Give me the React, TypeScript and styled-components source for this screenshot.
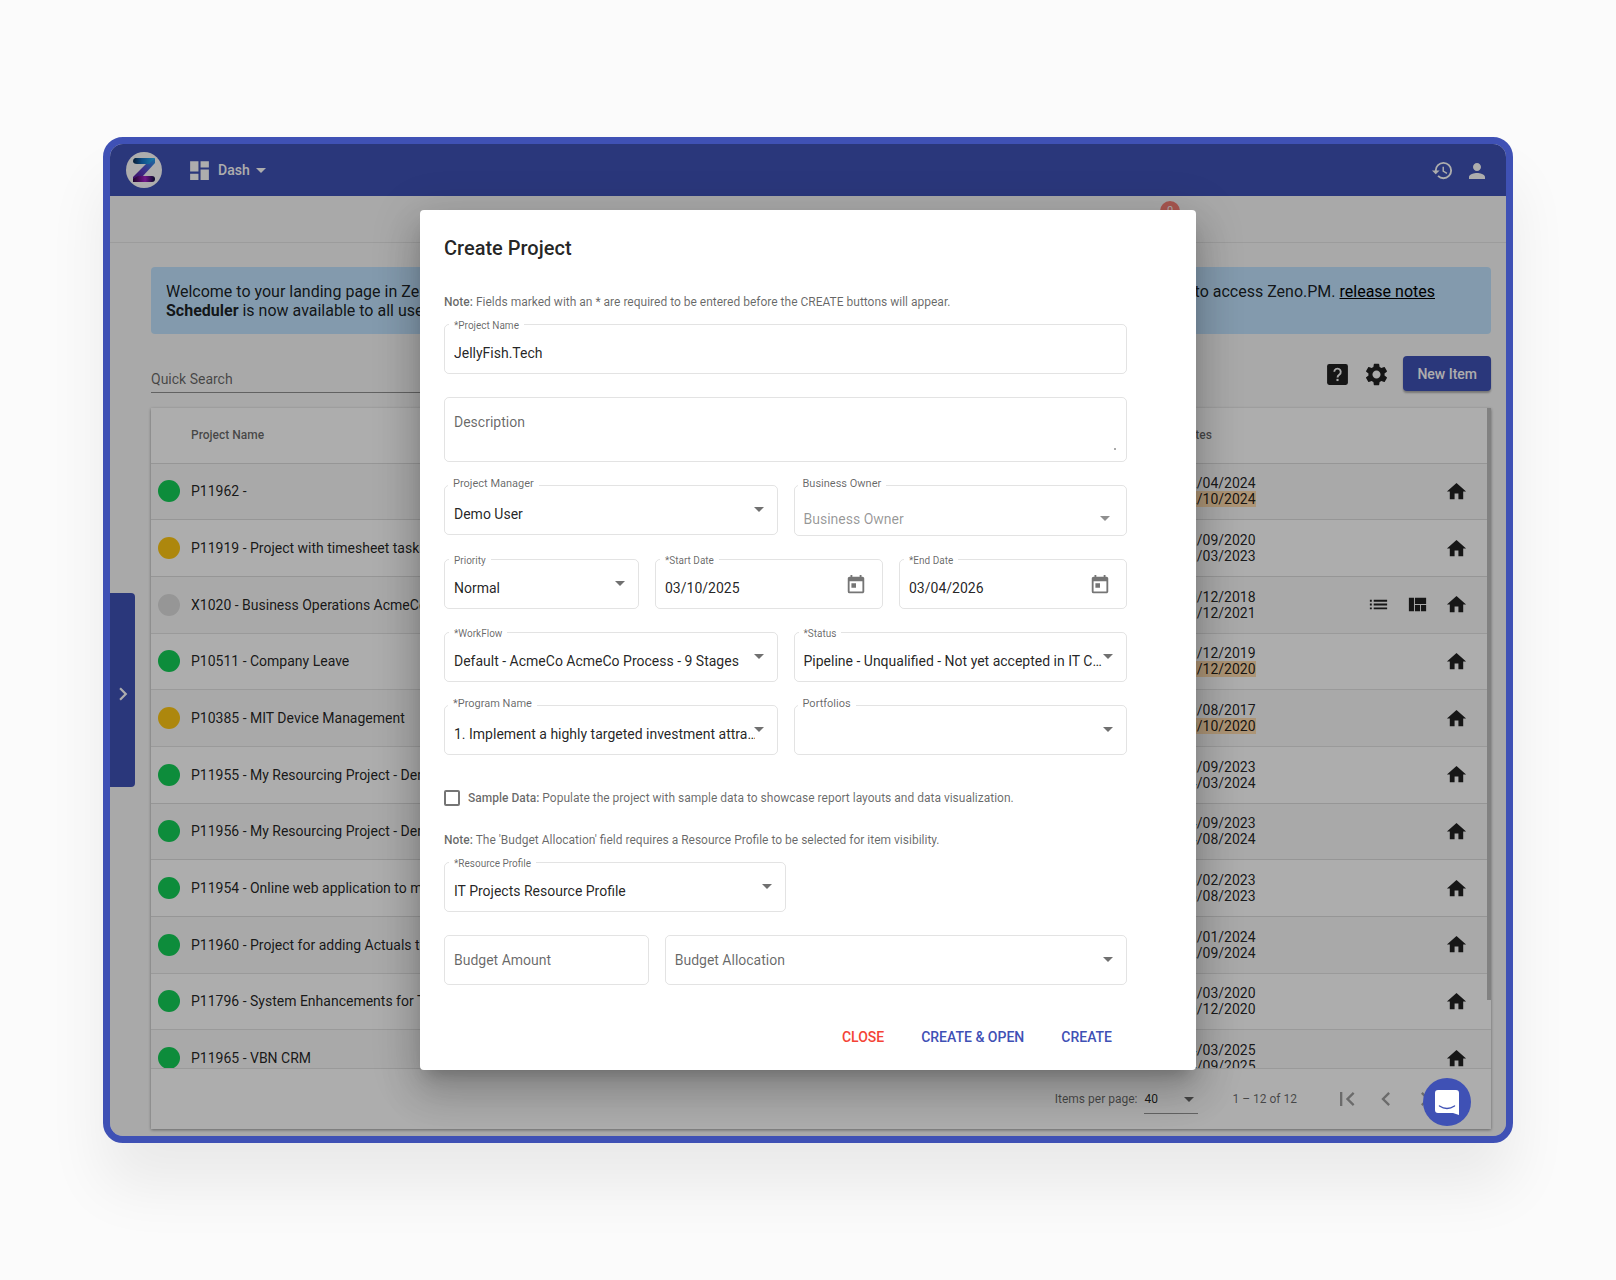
import React from 'react';
import styled, { createGlobalStyle } from 'styled-components';
import {
  MdDashboard, MdHistory, MdPerson, MdSettings, MdHome, MdList, MdViewQuilt,
  MdChevronRight, MdChevronLeft, MdFirstPage, MdToday,
} from 'react-icons/md';

const indigo = '#3f51b5';
const muted = 'rgba(0, 0, 0, 0.6)';
const line = 'rgba(0, 0, 0, 0.11)';

const GlobalStyle = createGlobalStyle`
  *, *::before, *::after { box-sizing: border-box; }
  body { margin: 0; background: #fbfbfb; }
  body, button, input, select, textarea {
    font-family: Roboto, "Liberation Sans", sans-serif;
    font-size: 14px;
    color: rgba(0, 0, 0, 0.87);
  }
  button { border: 0; padding: 0; background: none; cursor: pointer; }
  p, h1 { margin: 0; }
  svg { display: block; flex: none; }
`;

const Page = styled.div`
  min-height: 100vh;
  display: flex;
  align-items: center;
  padding: 40px 103px;
`;

const Frame = styled.div`
  position: relative;
  flex: 1;
  min-width: 0;
  overflow: hidden;
  border: 7px solid ${indigo};
  border-radius: 20px;
  background: #fafafa;
`;

const FrameShadow = styled.div`
  flex: 1;
  min-width: 0;
  display: flex;
  border-radius: 20px;
  box-shadow: 0 44px 60px rgba(0, 0, 0, 0.07);
`;

const TopBar = styled.header`
  display: flex;
  align-items: center;
  height: 52px;
  padding: 0 17px 0 16px;
  background: ${indigo};
  color: #fff;
`;

const Menu = styled.button`
  display: flex;
  align-items: center;
  gap: 6px;
  margin-left: 25px;
  color: #fff;
  font-weight: 500;
`;

const TopActions = styled.div`
  display: flex;
  gap: 11px;
  margin-left: auto;
  padding-top: 1px;
`;

const IconButton = styled.button`
  display: flex;
  align-items: center;
  justify-content: center;
  color: inherit;
`;

const SubNav = styled.nav`
  display: flex;
  justify-content: flex-end;
  height: 47px;
  padding: 5px 326px 0 0;
  border-bottom: 1px solid rgba(0, 0, 0, 0.08);
`;

const Badge = styled.span`
  width: 20px;
  height: 20px;
  border-radius: 50%;
  background: #f98077;
  color: #fff;
  font-size: 11px;
  line-height: 20px;
  text-align: center;
`;

const Content = styled.main`
  padding: 24px 15px 7px 41px;
`;

const Banner = styled.section`
  display: grid;
  grid-template-columns: 1fr auto;
  align-items: start;
  height: 67px;
  padding: 15px 56px 0 15px;
  border-radius: 4px;
  background: #c1e4ff;
  font-size: 16px;
  line-height: 19px;
  a { color: #000; }
`;

const Toolbar = styled.div`
  display: flex;
  align-items: flex-start;
  gap: 14px;
  height: 37px;
  margin: 22px 0 15px;
`;

const Search = styled.input`
  width: 320px;
  height: 37px;
  margin-right: auto;
  padding: 9px 0 0;
  border: 0;
  border-bottom: 1px solid rgba(0, 0, 0, 0.42);
  border-radius: 0;
  background: none;
  outline: 0;
  &::placeholder { color: ${muted}; opacity: 1; }
`;

const ToolButton = styled(IconButton)`
  width: 25px;
  height: 37px;
`;

const NewItem = styled.button`
  height: 35px;
  padding: 0 14px;
  border-radius: 4px;
  background: ${indigo};
  color: #fff;
  font-weight: 500;
  box-shadow: 0 2px 2px rgba(0, 0, 0, 0.3);
`;

const Card = styled.section`
  position: relative;
  background: #fff;
  box-shadow: 0 1px 3px rgba(0, 0, 0, 0.4);
`;

const Scroller = styled.div`
  height: 660px;
  overflow: hidden;
`;

const ScrollThumb = styled.div`
  position: absolute;
  top: 0;
  right: 0;
  width: 4px;
  height: 592px;
  background: #bfbfbf;
`;

const Table = styled.table`
  width: 100%;
  height: 679px;
  border-collapse: collapse;
  table-layout: fixed;
  th {
    height: 55px;
    padding: 0;
    font-size: 12px;
    font-weight: 500;
    text-align: left;
    color: ${muted};
  }
  tr { border-bottom: 1px solid ${line}; }
  tbody tr:nth-child(odd) { background: #fafafa; }
  td { padding: 0; line-height: 16px; white-space: nowrap; }
  td:first-child { padding-left: 7px; }
`;

const Dot = styled.span<{ $color: string }>`
  display: block;
  width: 22px;
  height: 22px;
  border-radius: 50%;
  background: ${p => p.$color};
`;

const Late = styled.span`
  background: #ffdcaf;
`;

const RowActions = styled.div`
  display: flex;
  justify-content: flex-end;
  gap: 16px;
  padding-right: 23px;
`;

const Paginator = styled.footer`
  display: flex;
  align-items: center;
  justify-content: flex-end;
  height: 61px;
  padding-right: 52px;
  border-top: 1px solid ${line};
  font-size: 12px;
  color: ${muted};
`;

const PageSize = styled.label`
  display: flex;
  align-items: center;
  gap: 7px;
  margin-right: 34px;
`;

const SizeBox = styled.span`
  position: relative;
  display: flex;
  width: 54px;
  border-bottom: 1px solid rgba(0, 0, 0, 0.42);
`;

const SizeSelect = styled.select`
  appearance: none;
  width: 100%;
  height: 28px;
  border: 0;
  padding: 0;
  background: none;
  font-size: 12px;
`;

const PageButtons = styled.div`
  display: flex;
  gap: 11px;
  margin-left: 36px;
  color: rgba(0, 0, 0, 0.38);
`;

const Drawer = styled.button`
  position: absolute;
  left: 0;
  top: 449px;
  display: flex;
  align-items: center;
  justify-content: center;
  width: 25px;
  height: 194px;
  padding-top: 8px;
  border-radius: 0 4px 4px 0;
  background: ${indigo};
  color: #fff;
`;

const Backdrop = styled.div`
  position: absolute;
  inset: 0;
  display: flex;
  align-items: center;
  justify-content: center;
  background: rgba(0, 0, 0, 0.32);
`;

const Dialog = styled.form`
  width: 776px;
  padding: 26px 69px 15px 24px;
  border-radius: 4px;
  background: #fff;
  box-shadow: 0 11px 15px -7px rgba(0, 0, 0, 0.2), 0 24px 38px 3px rgba(0, 0, 0, 0.14),
    0 9px 46px 8px rgba(0, 0, 0, 0.12);
`;

const Title = styled.h1`
  font-size: 20px;
  font-weight: 500;
  line-height: 24px;
`;

const Note = styled.p`
  font-size: 12px;
  line-height: 16px;
  color: ${muted};
  b { font-weight: 500; }
`;

const IntroNote = styled(Note)`
  margin: 34px 0 14px;
`;

const ProfileNote = styled(Note)`
  margin-bottom: 14px;
`;

const Stack = styled.div`
  display: grid;
  gap: 23px;
`;

const Row = styled.div<{ $cols: string }>`
  display: grid;
  grid-template-columns: ${p => p.$cols};
  align-items: start;
  gap: 16px;
`;

const FieldBox = styled.div<{ $height?: number }>`
  position: relative;
  height: ${p => p.$height ?? 50}px;
  border: 1px solid ${line};
  border-radius: 5px;
`;

const FloatingLabel = styled.label<{ $large?: boolean }>`
  position: absolute;
  top: ${p => (p.$large ? '-10px' : '-7px')};
  left: ${p => (p.$large ? '3px' : '4px')};
  padding: 0 5px;
  background: #fff;
  font-size: ${p => (p.$large ? '11px' : '10px')};
  line-height: 16px;
  color: ${muted};
`;

const control = `
  display: block;
  width: 100%;
  height: 100%;
  border: 0;
  margin: 0;
  background: none;
  outline: 0;
  appearance: none;
`;

const TextInput = styled.input`
  ${control}
  padding: 8px 9px 0;
  &:placeholder-shown { padding-top: 0; }
  &::placeholder { color: ${muted}; opacity: 1; }
`;

const Select = styled.select<{ $empty?: boolean; $low?: boolean }>`
  ${control}
  padding: ${p => (p.$low ? '16px' : p.$empty ? '0' : '8px')} 22px 0 9px;
  color: ${p => (p.$low ? 'rgba(0, 0, 0, 0.42)' : p.$empty ? muted : 'rgba(0, 0, 0, 0.87)')};
  opacity: 1;
`;

const TextArea = styled.textarea`
  ${control}
  padding: 16px 9px;
  resize: none;
  &::placeholder { color: ${muted}; opacity: 1; }
`;

const Grip = styled.span`
  position: absolute;
  right: 10px;
  bottom: 11px;
  width: 2px;
  height: 2px;
  background: #aaa;
`;

const ArrowSlot = styled.span<{ $low?: boolean }>`
  position: absolute;
  top: ${p => (p.$low ? '30px' : '21px')};
  right: ${p => (p.$low ? '16px' : '13px')};
  pointer-events: none;
  color: ${p => (p.$low ? '#8f8f8f' : '#707070')};
`;

const CalendarButton = styled(IconButton)`
  position: absolute;
  top: 14px;
  right: 15px;
  color: #757575;
`;

const CheckRow = styled.label`
  display: flex;
  align-items: center;
  gap: 8px;
  margin: 35px 0 26px;
`;

const CheckBox = styled.input`
  appearance: none;
  width: 16px;
  height: 16px;
  margin: 0;
  border: 2px solid #757575;
  border-radius: 2px;
`;

const Actions = styled.div`
  display: flex;
  justify-content: flex-end;
  gap: 7px;
  margin-top: 34px;
`;

const Action = styled.button<{ $warn?: boolean }>`
  height: 36px;
  padding: 0 15px;
  font-weight: 500;
  color: ${p => (p.$warn ? '#f44336' : indigo)};
`;

const Chat = styled.button`
  position: absolute;
  right: 35px;
  bottom: 10px;
  display: flex;
  align-items: center;
  justify-content: center;
  width: 48px;
  height: 48px;
  border-radius: 50%;
  background: ${indigo};
`;

const Caret = () => (
  <svg width="10" height="5" viewBox="0 0 10 5" aria-hidden="true">
    <path d="M0 0h10L5 5z" fill="currentColor" />
  </svg>
);

const SizeCaret = styled.span`
  position: absolute;
  right: 4px;
  top: 12px;
  pointer-events: none;
`;

const Logo = () => (
  <svg width="36" height="36" viewBox="0 0 36 36" role="img" aria-label="Zeno">
    <defs>
      <linearGradient id="zt" x1="0" x2="1">
        <stop offset="0" stopColor="#0a2a4a" />
        <stop offset="0.4" stopColor="#1672c8" />
        <stop offset="1" stopColor="#2bbcff" />
      </linearGradient>
      <linearGradient id="zd" x1="1" y1="0" x2="0" y2="1">
        <stop offset="0" stopColor="#22a7f0" />
        <stop offset="0.5" stopColor="#5a48cc" />
        <stop offset="1" stopColor="#5a0d90" />
      </linearGradient>
      <linearGradient id="zb" x1="0" x2="1">
        <stop offset="0" stopColor="#2a0640" />
        <stop offset="0.55" stopColor="#a822cc" />
        <stop offset="1" stopColor="#0a0f3c" />
      </linearGradient>
    </defs>
    <circle cx="18" cy="18" r="18" fill="#fff" />
    <path d="M29 6v5L16 25l-9 4v-4L21 11z" fill="url(#zd)" />
    <path d="M9 6h20l-6 6H11q-4 0-4-3 0-2 2-3z" fill="url(#zt)" />
    <path d="M7 30v-3l5-3h14q3 0 3 3 0 3-3 3z" fill="url(#zb)" />
  </svg>
);

const HelpIcon = () => (
  <svg width="25" height="25" viewBox="0 0 24 24" aria-hidden="true">
    <rect x="2" y="2" width="20" height="20" rx="2" fill="currentColor" />
    <path d="M8.9 9.3a3.1 3.1 0 1 1 5 2.6c-1.2.9-1.9 1.4-1.9 2.9" fill="none" stroke="#fafafa" strokeWidth="1.8" />
    <rect x="11" y="16.2" width="2" height="2.1" fill="#fafafa" />
  </svg>
);

const ChatIcon = () => (
  <svg width="24" height="25" viewBox="0 0 24 25" aria-hidden="true">
    <path d="M3 0h18a3 3 0 0 1 3 3v22l-6-2H3a3 3 0 0 1-3-3V3a3 3 0 0 1 3-3z" fill="#fff" />
    <path d="M4.500 16q7.500 5 15 0" fill="none" stroke={indigo} strokeWidth="1.500" strokeLinecap="round" />
  </svg>
);

type Project = { name: string; color: string; start: string; end: string; late?: boolean; extra?: boolean };

const green = '#14ce57';
const amber = '#ffc814';
const grey = '#dedede';

const projects: Project[] = [
  { name: 'P11962 -', color: green, start: '12/04/2024', end: '12/10/2024', late: true },
  { name: 'P11919 - Project with timesheet tasks', color: amber, start: '01/09/2020', end: '31/03/2023' },
  { name: 'X1020 - Business Operations AcmeCo', color: grey, start: '10/12/2018', end: '30/12/2021', extra: true },
  { name: 'P10511 - Company Leave', color: green, start: '10/12/2019', end: '31/12/2020', late: true },
  { name: 'P10385 - MIT Device Management', color: amber, start: '19/08/2017', end: '30/10/2020', late: true },
  { name: 'P11955 - My Resourcing Project - Demo', color: green, start: '13/09/2023', end: '14/03/2024' },
  { name: 'P11956 - My Resourcing Project - Demo', color: green, start: '14/09/2023', end: '14/08/2024' },
  { name: 'P11954 - Online web application to manage', color: green, start: '16/02/2023', end: '16/08/2023' },
  { name: 'P11960 - Project for adding Actuals to', color: green, start: '11/01/2024', end: '12/09/2024' },
  { name: 'P11796 - System Enhancements for Team', color: green, start: '11/03/2020', end: '10/12/2020' },
  { name: 'P11965 - VBN CRM', color: green, start: '14/03/2025', end: '14/09/2025' },
];

type SelectFieldProps = {
  id: string;
  label: string;
  value?: string;
  empty?: boolean;
  low?: boolean;
  largeLabel?: boolean;
};

const SelectField = ({ id, label, value = '', empty, low, largeLabel }: SelectFieldProps) => (
  <FieldBox $height={low ? 51 : 50}>
    {!empty && <FloatingLabel htmlFor={id} $large={largeLabel}>{label}</FloatingLabel>}
    <Select id={id} aria-label={empty ? label : undefined} $empty={empty} $low={low} defaultValue={value}>
      <option value={value}>{value}</option>
    </Select>
    <ArrowSlot $low={low}><Caret /></ArrowSlot>
  </FieldBox>
);

const DateField = ({ id, label, value }: { id: string; label: string; value: string }) => (
  <FieldBox>
    <FloatingLabel htmlFor={id}>{label}</FloatingLabel>
    <TextInput id={id} defaultValue={value} />
    <CalendarButton type="button" aria-label={`Pick ${label}`}><MdToday size={22} /></CalendarButton>
  </FieldBox>
);

const CreateProject = () => (
  <Dialog role="dialog" aria-labelledby="dialog-title" onSubmit={e => e.preventDefault()}>
    <Title id="dialog-title">Create Project</Title>
    <IntroNote>
      <b>Note:</b> Fields marked with an * are required to be entered before the CREATE buttons will appear.
    </IntroNote>
    <Stack>
      <FieldBox>
        <FloatingLabel htmlFor="name">*Project Name</FloatingLabel>
        <TextInput id="name" defaultValue="JellyFish.Tech" />
      </FieldBox>
      <FieldBox $height={65}>
        <TextArea aria-label="Description" placeholder="Description" />
        <Grip />
      </FieldBox>
      <Row $cols="1fr 1fr">
        <SelectField id="manager" label="Project Manager" value="Demo User" largeLabel />
        <SelectField id="owner" label="Business Owner" value="Business Owner" low largeLabel />
      </Row>
      <Row $cols="195fr 228fr 228fr">
        <SelectField id="priority" label="Priority" value="Normal" />
        <DateField id="start" label="*Start Date" value="03/10/2025" />
        <DateField id="end" label="*End Date" value="03/04/2026" />
      </Row>
      <Row $cols="1fr 1fr">
        <SelectField id="workflow" label="*WorkFlow" value="Default - AcmeCo AcmeCo Process - 9 Stages" />
        <SelectField id="status" label="*Status" value="Pipeline - Unqualified - Not yet accepted in IT C…" />
      </Row>
      <Row $cols="1fr 1fr">
        <SelectField
          id="program"
          label="*Program Name"
          value="1. Implement a highly targeted investment attra…"
          largeLabel
        />
        <SelectField id="portfolios" label="Portfolios" largeLabel />
      </Row>
    </Stack>
    <CheckRow>
      <CheckBox type="checkbox" />
      <Note as="span">
        <b>Sample Data:</b> Populate the project with sample data to showcase report layouts and data visualization.
      </Note>
    </CheckRow>
    <ProfileNote>
      <b>Note:</b> The 'Budget Allocation' field requires a Resource Profile to be selected for item visibility.
    </ProfileNote>
    <Stack>
      <Row $cols="50%">
        <SelectField id="profile" label="*Resource Profile" value="IT Projects Resource Profile" />
      </Row>
      <Row $cols="205fr 463fr">
        <FieldBox><TextInput aria-label="Budget Amount" placeholder="Budget Amount" /></FieldBox>
        <SelectField id="allocation" label="Budget Allocation" value="Budget Allocation" empty />
      </Row>
    </Stack>
    <Actions>
      <Action type="button" $warn>CLOSE</Action>
      <Action type="submit">CREATE &amp; OPEN</Action>
      <Action type="submit">CREATE</Action>
    </Actions>
  </Dialog>
);

export default function App() {
  return (
    <>
      <GlobalStyle />
      <Page>
        <FrameShadow>
          <Frame>
            <TopBar>
              <Logo />
              <Menu type="button">
                <MdDashboard size={25} /> Dash <Caret />
              </Menu>
              <TopActions>
                <IconButton type="button" aria-label="History"><MdHistory size={23} /></IconButton>
                <IconButton type="button" aria-label="Account"><MdPerson size={24} /></IconButton>
              </TopActions>
            </TopBar>
            <SubNav><Badge>0</Badge></SubNav>
            <Content>
              <Banner>
                <p>
                  Welcome to your landing page in Zeno.PM<br />
                  <b>Scheduler</b> is now available to all users
                </p>
                <p>link to access Zeno.PM. <a href="#notes">release notes</a></p>
              </Banner>
              <Toolbar>
                <Search aria-label="Quick Search" placeholder="Quick Search" />
                <ToolButton type="button" aria-label="Help"><HelpIcon /></ToolButton>
                <ToolButton type="button" aria-label="Settings"><MdSettings size={27} /></ToolButton>
                <NewItem type="button">New Item</NewItem>
              </Toolbar>
              <Card>
                <Scroller>
                  <Table>
                    <colgroup>
                      <col width="40" />
                      <col />
                      <col width="120" />
                      <col width="190" />
                    </colgroup>
                    <thead>
                      <tr><th /><th>Project Name</th><th>Dates</th><th /></tr>
                    </thead>
                    <tbody>
                      {projects.map(p => (
                        <tr key={p.name}>
                          <td><Dot $color={p.color} /></td>
                          <td>{p.name}</td>
                          <td>
                            {p.start}<br />
                            {p.late ? <Late>{p.end}</Late> : p.end}
                          </td>
                          <td>
                            <RowActions>
                              {p.extra && <MdList size={23} />}
                              {p.extra && <MdViewQuilt size={23} />}
                              <MdHome size={23} />
                            </RowActions>
                          </td>
                        </tr>
                      ))}
                    </tbody>
                  </Table>
                </Scroller>
                <ScrollThumb />
                <Paginator>
                  <PageSize>
                    Items per page:
                    <SizeBox>
                      <SizeSelect defaultValue="40"><option>40</option></SizeSelect>
                      <SizeCaret><Caret /></SizeCaret>
                    </SizeBox>
                  </PageSize>
                  1 – 12 of 12
                  <PageButtons>
                    <IconButton type="button" aria-label="First page"><MdFirstPage size={28} /></IconButton>
                    <IconButton type="button" aria-label="Previous page"><MdChevronLeft size={28} /></IconButton>
                    <IconButton type="button" aria-label="Next page"><MdChevronRight size={28} /></IconButton>
                  </PageButtons>
                </Paginator>
              </Card>
            </Content>
            <Drawer type="button" aria-label="Open panel"><MdChevronRight size={26} /></Drawer>
            <Backdrop><CreateProject /></Backdrop>
            <Chat type="button" aria-label="Open chat"><ChatIcon /></Chat>
          </Frame>
        </FrameShadow>
      </Page>
    </>
  );
}
